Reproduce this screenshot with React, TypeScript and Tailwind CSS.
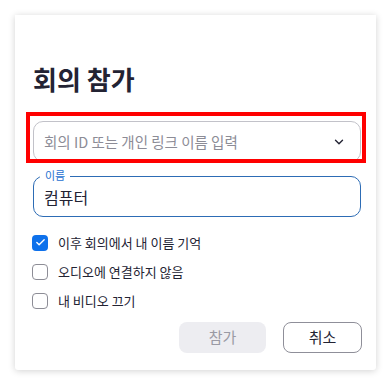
import { ChevronDown, Check } from "lucide-react";

const font = { fontFamily: '"Noto Sans CJK KR", "Noto Sans", sans-serif' };

function CheckRow({ label, checked }: { label: string; checked?: boolean }) {
  return (
    <label className="flex h-[29px] items-center gap-[10px]">
      {checked ? (
        <span className="ml-[-1px] flex h-4 w-4 items-center justify-center rounded-[4px] bg-[#0e71eb]">
          <Check size={11} strokeWidth={3} className="text-white" />
        </span>
      ) : (
        <span className="ml-[-1px] h-4 w-4 rounded-[4px] border border-[#8d8d96] bg-white" />
      )}
      <span className="text-[13px] leading-none text-[#232333]">{label}</span>
    </label>
  );
}

export default function App() {
  return (
    <div
      className="h-[385px] w-[391px] overflow-hidden bg-white pl-[15px] pt-[15px]"
      style={font}
    >
      <div className="flex h-[355px] w-[361px] flex-col rounded-b-[3px] bg-white pl-[18px] pr-[15px] pt-[48px] shadow-[0_1px_7px_rgba(0,0,0,0.18)]">
        <h1 className="text-[26px] font-bold leading-[32px] text-[#232333]">
          회의 참가
        </h1>

        {/* Meeting ID dropdown, with the red annotation box over it */}
        <div className="relative mt-[26px]">
          <div className="flex h-[41px] items-center justify-between rounded-[10px] border border-[#c2c2c9] pl-[10px] pr-[14px]">
            <span className="text-[14.5px] text-[#8c8c96]">
              회의 ID 또는 개인 링크 이름 입력
            </span>
            <ChevronDown size={14} strokeWidth={2.4} className="text-[#232333]" />
          </div>
          <div className="pointer-events-none absolute -left-[7px] -right-[5px] -top-[9px] -bottom-[1px] border-4 border-[#ff0000]" />
        </div>

        {/* Name field */}
        <div className="relative mt-[14px] flex h-[41px] items-center rounded-[10px] border border-[#2d6cb5] pl-[10px]">
          <span className="absolute -top-[9px] left-[6px] bg-white px-[5px] text-[11px] leading-[14px] text-[#1e6fd0]">
            이름
          </span>
          <span className="text-[16px] text-[#232333]">컴퓨터</span>
        </div>

        <div className="mt-[11px] flex flex-col">
          <CheckRow label="이후 회의에서 내 이름 기억" checked />
          <CheckRow label="오디오에 연결하지 않음" />
          <CheckRow label="내 비디오 끄기" />
        </div>

        <div className="mt-[7px] flex justify-end gap-[17px]">
          <button className="h-[31px] w-[87px] rounded-[8px] bg-[#ededf1] text-[15px] text-[#9a9aa4]">
            참가
          </button>
          <button className="mr-[-1px] h-[31px] w-[79px] rounded-[8px] border border-[#8f8f99] bg-white text-[15px] text-[#232333]">
            취소
          </button>
        </div>
      </div>
    </div>
  );
}
